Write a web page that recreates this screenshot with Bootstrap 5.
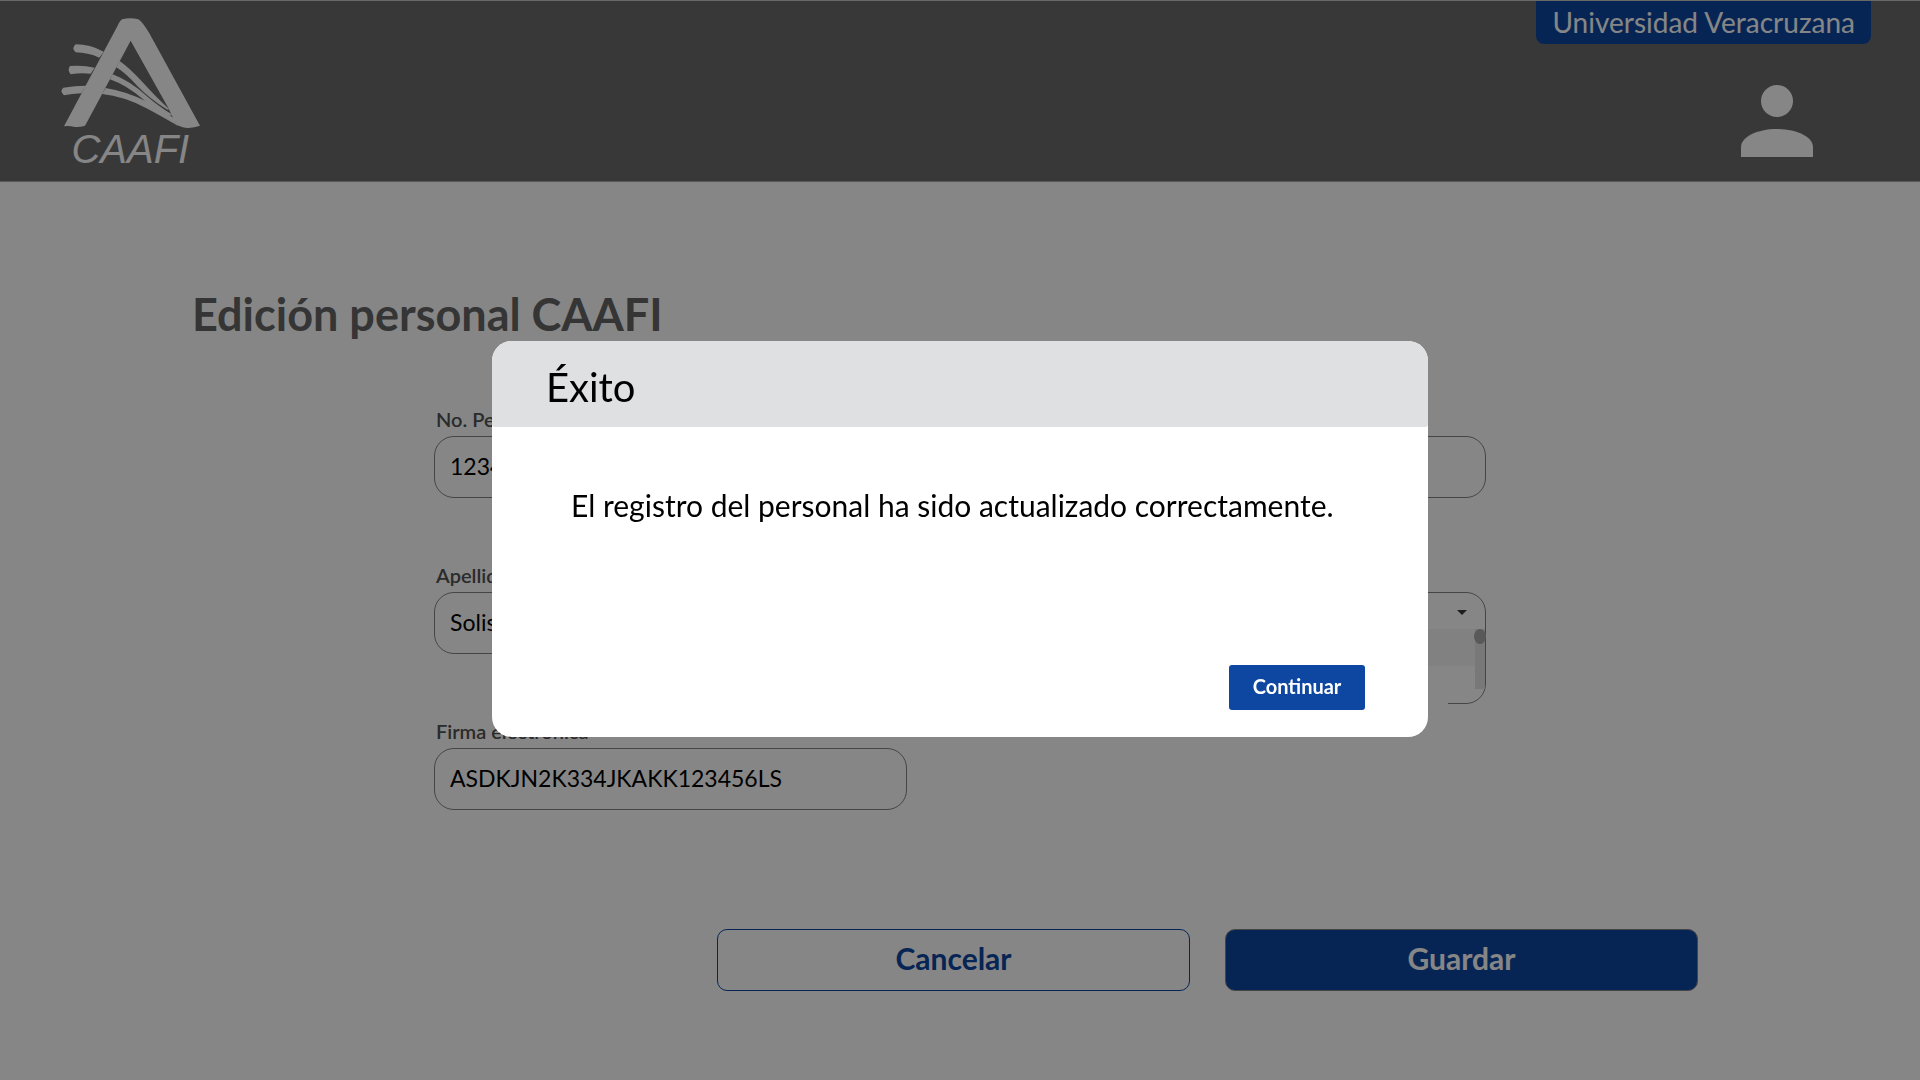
<!DOCTYPE html>
<html lang="es">
<head>
<meta charset="utf-8">
<meta name="viewport" content="width=device-width, initial-scale=1">
<title>Edición personal CAAFI</title>
<link href="https://cdn.jsdelivr.net/npm/bootstrap@5.3.0/dist/css/bootstrap.min.css" rel="stylesheet">
<style>
  :root { --uv-blue: #0d47a1; --uv-gray: #6c6c6c; --uv-line: #848484; }
  body { font-family: Lato, "Open Sans", sans-serif; color: #000; background: #fff; }
  .site-header { background: var(--uv-gray); border-top: 1px solid #c4c8c4; border-bottom: 1px solid #a8a8a8; min-height: 182px; padding-left: 60px; }
  .brand-link { margin-top: 16px; }
  .brand-link svg { width: 140px; height: 158px; }
  .uni-tag { background: var(--uv-blue); color: #fff; font-size: 28px; line-height: 43px; padding: 0 16px; border-radius: 0 0 8px 8px; margin-right: 49px; }
  .profile-btn { margin: 41px 107px 0 0; line-height: 0; }
  .page-title { font-size: 45px; line-height: 56px; font-weight: 700; color: #656565; margin: 0; }
  .page-main { padding: 104px 0 64px; }
  .title-wrap { padding-left: 10%; padding-right: 16px; }
  .staff-form { padding-top: 65px; }
  .form-cols { max-width: 1052px; column-gap: 106px; }
  .form-cols > div { flex: 1 1 0; row-gap: 65px; }
  .field-label { font-size: 20px; line-height: 24px; font-weight: 600; color: #525252; margin: 0 0 5px 2px; display: block; }
  .field-box { height: 62px; border: 1px solid var(--uv-line); border-radius: 20px; font-size: 23px; color: #000; padding: 0 15px 2px; background: #fff; }
  .pick-box { border: 1px solid var(--uv-line); border-radius: 20px; height: 112px; }
  .pick-select { border: 0; font-size: 20px; height: 36px; padding: 0 15px; background: transparent; appearance: none; }
  .pick-caret { right: 18px; top: 17px; width: 10px; height: 5px; background: #3a3a3a; clip-path: polygon(0 0, 100% 0, 50% 100%); }
  .pick-list { font-size: 20px; line-height: 38px; }
  .pick-list li { padding: 0 15px; background: #fff; margin-right: 37px; }
  .pick-list li:first-child { background: #f6f6f6; margin-right: 0; line-height: 37px; }
  .pick-scroll { right: 0; top: 0; width: 10px; height: 60px; background: #e4e4e4; }
  .pick-thumb { right: -1px; top: 0; width: 12px; height: 15px; border-radius: 50%; background: #aaa; }
  .form-actions { gap: 35px; margin-top: 119px; padding: 0 222px 0 16px; }
  .action-btn { width: 473px; height: 62px; font-size: 30px; line-height: 36px; padding: 0 0 4px; font-weight: 700; border-radius: 10px; border: 1px solid var(--uv-blue); color: var(--uv-blue); }
  .action-save { background: var(--uv-blue); color: #fff; border-color: var(--uv-line); }
  .modal-backdrop.show { opacity: .475; }
  .notice-dialog { max-width: 936px; padding-bottom: 2px; }
  .notice-content { border: 0; border-radius: 20px; overflow: hidden; }
  .notice-head { background: #dfe0e2; border: 0; border-radius: 0 0 3px 3px; height: 86px; padding: 6px 54px 0; }
  .notice-title { font-size: 40px; line-height: 48px; font-weight: 400; }
  .notice-body { padding: 58px 79px 0; font-size: 30px; line-height: 40px; min-height: 238px; }
  .notice-foot { border: 0; padding: 0 63px 27px; }
  .continue-btn { width: 136px; height: 45px; background: var(--uv-blue); color: #fff; border: 0; border-radius: 3px; font-size: 20px; line-height: 24px; font-weight: 700; }
  .notice-foot > * { margin: 0; }
</style>
<script src="https://cdn.jsdelivr.net/npm/bootstrap@5.3.0/dist/js/bootstrap.bundle.min.js" defer></script>
</head>
<body class="modal-open overflow-hidden">
<header class="site-header d-flex justify-content-between align-items-start">
  <a class="brand-link" href="#" aria-label="CAAFI">
    <svg viewBox="60 50 420 474" fill="#fff" aria-hidden="true">
      <path fill-rule="evenodd" d="M72 378L234 74Q240 60 247 57Q270 51 295 57Q307 64 328 99L480 376Q464 381 445 383Q425 383 408 370L395 344L385 323L272 121L136 375Q130 381 105 380Q88 376 72 378Z"/>
      <path d="M107 132Q150 132 191 154L178 172Q144 157 107 156Q93 144 107 132ZM90 197Q130 194 164 202L152 220Q122 216 92 222Q81 210 90 197ZM70 262Q105 256 138 256L124 279Q95 280 72 285Q58 274 70 262Z"/>
      <path d="M239 182Q270 204 310 248Q350 292 386 325Q388 330 380 327Q330 296 292 257Q258 219 229 201ZM218 222Q272 243 320 287Q352 315 395 342Q397 347 390 345Q350 329 308 296Q260 255 210 237ZM197 263Q262 274 318 303Q360 325 405 355Q414 364 404 364Q414 371 416 378Q360 345 318 323Q252 288 186 281Z"/>
      <text x="271" y="489" text-anchor="middle" font-family="Liberation Sans, sans-serif" font-style="italic" font-size="120">CAAFI</text>
    </svg>
  </a>
  <div class="d-flex flex-column align-items-end">
    <div class="uni-tag">Universidad Veracruzana</div>
    <button type="button" class="profile-btn btn p-0 border-0" aria-label="Perfil">
      <svg width="72" height="72" viewBox="0 0 72 72" fill="#fff" aria-hidden="true"><circle cx="36" cy="16" r="16"/><path d="M0 72V62C0 52 16 44 36 44S72 52 72 62V72Z"/></svg>
    </button>
  </div>
</header>

<main class="page-main">
  <div class="title-wrap"><h1 class="page-title">Edición personal CAAFI</h1></div>
  <form class="staff-form">
    <div class="form-cols d-flex mx-auto">
      <div class="d-flex flex-column">
        <div><label class="field-label" for="num">No. Personal</label><input class="field-box w-100" id="num" type="text" value="12345"></div>
        <div><label class="field-label" for="last">Apellidos</label><input class="field-box w-100" id="last" type="text" value="Solis"></div>
        <div><label class="field-label" for="sign">Firma electrónica</label><input class="field-box w-100" id="sign" type="text" value="ASDKJN2K334JKAKK123456LS"></div>
      </div>
      <div class="d-flex flex-column">
        <div><label class="field-label" for="name">Nombre</label><input class="field-box w-100" id="name" type="text"></div>
        <div><label class="field-label" for="role">Cargo</label>
          <div class="pick-box position-relative">
            <select class="pick-select w-100 d-block" id="role"><option></option></select>
            <span class="pick-caret position-absolute"></span>
            <div class="position-relative">
              <ul class="pick-list list-unstyled m-0"><li>&nbsp;</li><li>&nbsp;</li></ul>
              <span class="pick-scroll position-absolute"></span>
              <span class="pick-thumb position-absolute"></span>
            </div>
          </div>
        </div>
      </div>
    </div>
    <div class="form-actions d-flex justify-content-end">
      <button type="button" class="action-btn btn">Cancelar</button>
      <button type="submit" class="action-btn action-save btn">Guardar</button>
    </div>
  </form>
</main>

<div class="modal-backdrop show"></div>
<div class="modal show d-block" tabindex="-1" role="dialog" aria-modal="true" aria-labelledby="noticeTitle">
  <div class="modal-dialog modal-dialog-centered notice-dialog">
    <div class="modal-content notice-content">
      <div class="modal-header notice-head"><h2 class="modal-title notice-title" id="noticeTitle">Éxito</h2></div>
      <div class="modal-body notice-body">El registro del personal ha sido actualizado correctamente.</div>
      <div class="modal-footer notice-foot"><button type="button" class="continue-btn btn p-0 pb-1">Continuar</button></div>
    </div>
  </div>
</div>
</body>
</html>
